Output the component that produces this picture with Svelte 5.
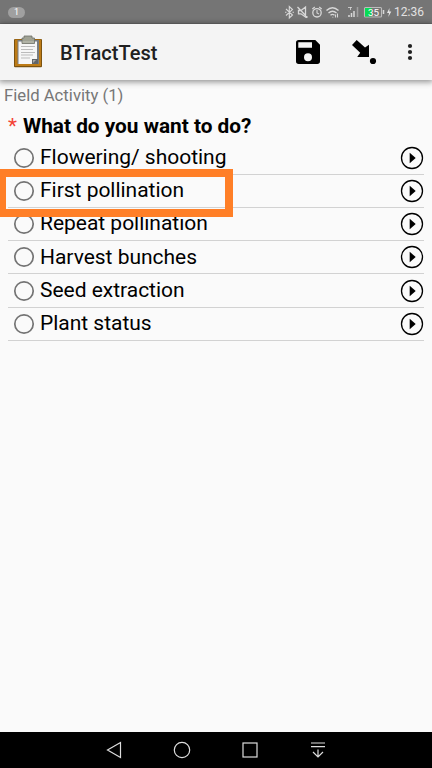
<script>
  const choices = [
    'Flowering/ shooting',
    'First pollination',
    'Repeat pollination',
    'Harvest bunches',
    'Seed extraction',
    'Plant status'
  ];
</script>

<div class="screen">
  <div class="status">
    <span class="count">1</span>
    <svg class="signals" width="109" height="24" viewBox="284 0 109 24" fill="none" stroke="#d8d8d8" stroke-width="1.1">
      <path d="M286 9l6.5 6-3.2 3V6.5l3.2 3-6.5 6M285 12.3h1.5M292.5 12.3h1.5" />
      <path d="M298.500 10.500h2.500l4.500-3.500v10l-4.500-3.200h-2.500zM297.500 7l10 10.500" stroke-width="1.3" />
      <circle cx="317" cy="12.8" r="4.2" stroke-width="1.3" /><path d="M317 10v3l2 1M312.300 9l2.500-2M321.700 9l-2.500-2" />
      <path d="M326.500 10.500q6-5.500 12 0M328.500 13q4-3.500 8 0M330.500 15.200q2-1.600 4 0" stroke-width="1.4" />
      <path d="M332.500 17.200h.8M335.500 17.500v-3M337.500 17.500v-4" />
      <path d="M349 17v-2M351.500 17v-4M354 17v-6" stroke-width="1.5" />
      <path d="M357.500 17V7" stroke="#a0a0a0" stroke-width="1.5" /><path d="M348 7.500h4M350.500 7v3" stroke-width=".8" />
      <rect x="364.500" y="7.500" width="17" height="9.500" rx="1" stroke="#bdbdbd" />
      <rect x="365" y="8" width="6.500" height="8.500" fill="#08dc55" stroke="none" />
      <path d="M383.500 10v4" stroke-width="1.500" />
      <text x="368" y="15.800" font-size="9.800" fill="#fff" stroke="none">35</text>
      <path d="M389.500 8l-2.500 5h2l-.7 4 3-5.500h-2z" fill="#e5e5e5" stroke="none" />
    </svg>
    <span class="time">12:36</span>
  </div>

  <header>
    <svg class="clipboard" width="30" height="34" viewBox="13 35 30 34">
      <rect x="14" y="39" width="28" height="28.300" rx="1" fill="#7b520f" />
      <rect x="15" y="39.500" width="26" height="26.500" fill="#bd7b16" />
      <path d="M17.500 40h21.500v24H17.500z" fill="#777d83" />
      <path d="M18.500 41.500h18.500v22.500H18.500z" fill="#f6f6f6" />
      <path d="M21 46.500h14M21 49.500h12M21 52.500h14M21 55h12M21 58h9" stroke="#bbb" stroke-width="1" />
      <path d="M32 59h6v5h-6z" fill="#606569" /><path d="M33 60h3l-3 3z" fill="#aaa" />
      <path d="M24 38v-2h8v2h2.500v5.500H22V38z" fill="#a0a294" stroke="#6d7067" stroke-width=".8" />
      <path d="M22.500 42h11.500" stroke="#c1c3b7" />
    </svg>
    <h1>BTractTest</h1>
    <svg class="actions" width="130" height="36" viewBox="292 34 130 36">
      <path fill-rule="evenodd" d="M298.700 40h16.600l4.700 4.700v16.600a2.700 2.700 0 0 1-2.700 2.700h-18.600a2.700 2.700 0 0 1-2.700-2.700V42.700a2.700 2.700 0 0 1 2.700-2.700zM298.300 42.300v5.500h13.700v-5.500zM308 53.300a4 4 0 1 0 0 8 4 4 0 0 0 0-8z" />
      <path d="M356.700 40l8.300 7.500 4-2.700V57H357.200l3-4.300-8.200-7.700z" />
      <circle cx="373" cy="61" r="3.100" />
      <g fill="#202020"><circle cx="410" cy="46" r="2.100" /><circle cx="410" cy="52" r="2.100" /><circle cx="410" cy="58" r="2.100" /></g>
    </svg>
  </header>

  <main>
    <div class="group">Field Activity (1)</div>
    <h2><span class="required">*</span> <span class="question">What do you want to do?</span></h2>
    <div class="choices">
      {#each choices as choice}
        <div class="choice">
          <svg class="radio" width="22" height="22" viewBox="0 0 22 22"><circle cx="11" cy="11" r="9.200" fill="none" stroke="#747474" stroke-width="1.700" /></svg>
          <span class="label">{choice}</span>
          <svg class="play" width="24" height="24" viewBox="0 0 24 24"><circle cx="12" cy="12" r="10.500" fill="none" stroke="#000" stroke-width="1.300" /><path d="M9.700 6.800l6 5.200-6 5.200z" /></svg>
        </div>
      {/each}
      <div class="highlight"></div>
    </div>
  </main>

  <nav>
    <svg width="432" height="36" viewBox="0 732 432 36" fill="none" stroke="#ddd" stroke-width="1.200">
      <path d="M120.500 742.500v15L107.500 750z" />
      <circle cx="182" cy="750" r="7.700" />
      <rect x="243" y="743" width="14" height="14" />
      <path d="M311 743h14M311 746.700h14M318 749.500v7.500M313 752l5 5 5-5" />
    </svg>
  </nav>
</div>

<style>
  .screen { width: 432px; height: 768px; display: flex; flex-direction: column; background: #fafafa; color: #000; font-family: Roboto, sans-serif; overflow: hidden; }
  .status { height: 24px; flex: none; display: flex; align-items: center; background: #757575; box-shadow: inset 0 -1px #6a6a6a; }
  .count { width: 17px; height: 11px; margin-left: 8px; border-radius: 6px; background: #a0a0a0; color: #fff; font-size: 9px; line-height: 11px; text-align: center; }
  .signals { margin-left: auto; }
  .time { width: 38px; margin-left: 1px; color: #e2e2e2; font-size: 12px; line-height: 24px; white-space: nowrap; }
  header { height: 56px; flex: none; display: flex; align-items: center; background: #f4f4f4; box-shadow: 0 1px 6px 1px rgba(0,0,0,.42); position: relative; }
  .clipboard { margin-left: 13px; }
  h1 { margin: 2px 0 0 17px; font-size: 20px; font-weight: 500; line-height: 28px; color: #202020; white-space: nowrap; }
  .actions { margin: 0 10px 0 auto; }
  main { flex: 1; }
  .group { height: 30px; padding-left: 4px; font-size: 16.700px; line-height: 31.400px; color: #777; }
  h2 { height: 31.700px; margin: 0; padding-left: 8px; display: flex; gap: 6px; font-size: 20.800px; line-height: 32px; font-weight: 700; white-space: nowrap; }
  .required { color: #f44336; font-weight: 400; }
  .choices { position: relative; margin: 0 8px; }
  .choice { box-sizing: border-box; height: 33.200px; padding-left: 5px; display: flex; align-items: center; border-bottom: 1px solid #d2d2d2; }
  .label { margin: 0 0 1.400px 5px; font-size: 21px; letter-spacing: -.02px; line-height: 30px; white-space: nowrap; }
  .play { margin-left: auto; }
  .highlight { position: absolute; box-sizing: border-box; left: -8px; top: 27.300px; width: 233px; height: 48px; border: solid #ff7f27; border-width: 8px 8px 8px 6px; }
  nav { height: 36px; flex: none; background: #000; }
  nav svg { display: block; }
</style>
